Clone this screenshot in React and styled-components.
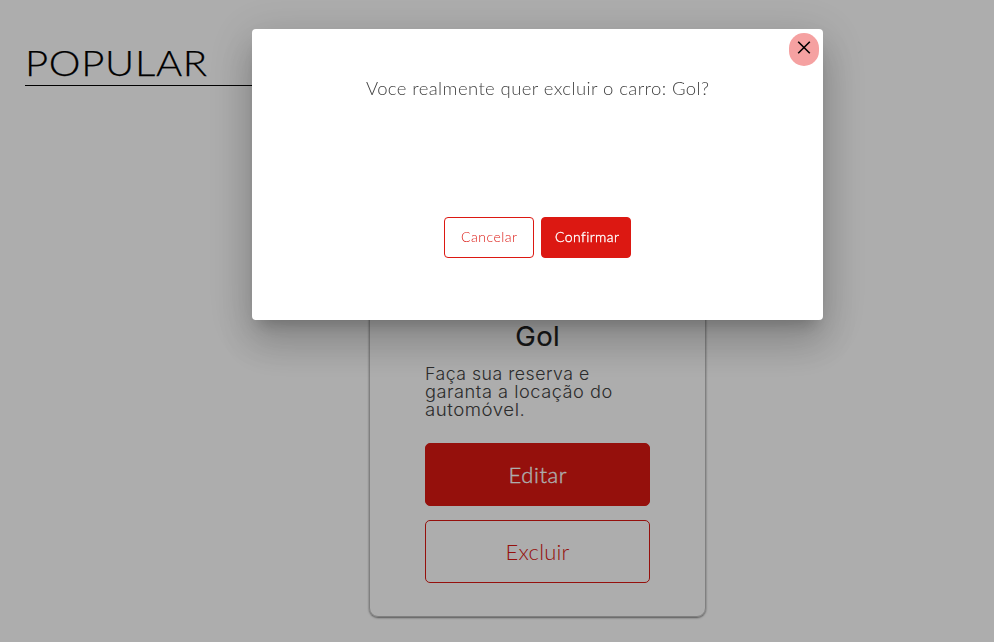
import React from "react";
import styled, { createGlobalStyle } from "styled-components";

const GlobalStyle = createGlobalStyle`
  * { box-sizing: border-box; }
  html, body { margin: 0; height: 100%; overflow: hidden; background: #fff; }
`;

const Page = styled.main`
  height: 642px;
  overflow: hidden;
  padding: 42px 25px 0;
  font-family: Lato, "Open Sans", sans-serif;
`;

const CategoryTitle = styled.h1`
  margin: 0 0 24px;
  width: 520px;
  height: 44px;
  border-bottom: 1px solid #000;
  color: #000;
  font-size: 35px;
  line-height: 40px;
  font-weight: 300;
  -webkit-text-stroke: 0.25px currentColor;
  white-space: nowrap;
`;

const CarCard = styled.article`
  width: 337px;
  height: 507px;
  margin: 0 0 0 344px;
  padding: 0 55px 33px;
  display: flex;
  flex-direction: column;
  justify-content: flex-end;
  border: 1px solid #bdbdbd;
  border-radius: 9px;
  box-shadow: 0 1px 2px rgba(0, 0, 0, 0.5);
`;

const CarName = styled.h2`
  margin: 0 0 13px;
  text-align: center;
  color: #212121;
  font-family: Inter, sans-serif;
  font-size: 27.5px;
  line-height: 32px;
  font-weight: 400;
  -webkit-text-stroke: 0.2px currentColor;
`;

const Description = styled.p`
  margin: 0 0 24px;
  color: #424242;
  font-family: Inter, sans-serif;
  font-size: 17.5px;
  line-height: 18px;
  font-weight: 300;
  white-space: nowrap;
`;

const Spaced = styled.span`
  display: inline-block;
  letter-spacing: ${(p) => p.$gap}px;
  margin-right: ${(p) => -p.$gap}px;
  transform: scaleX(${(p) => p.$stretch || 1});
  transform-origin: left center;
`;

const Button = styled.button`
  display: flex;
  align-items: center;
  justify-content: center;
  padding: 0 0 ${(p) => (p.$large ? 0 : 2)}px;
  border: 1px solid #dc1812;
  border-radius: ${(p) => (p.$large ? 5 : 4)}px;
  width: ${(p) => (p.$large ? 225 : 90)}px;
  height: ${(p) => (p.$large ? 63 : 41)}px;
  background: ${(p) => (p.$filled ? "#dc1812" : "transparent")};
  color: ${(p) => (p.$filled ? "#fff" : "#dc1812")};
  font-family: Lato, sans-serif;
  font-size: ${(p) => (p.$large ? 22 : 14)}px;
  font-weight: 300;
  -webkit-text-stroke: ${(p) => (p.$filled ? 0.35 : 0)}px currentColor;
`;

const ConfirmButton = styled(Button)`
  padding-left: 2px;
`;

const CardActions = styled.div`
  display: grid;
  gap: 14px;
`;

const Backdrop = styled.div`
  position: fixed;
  inset: 0;
  padding: 29px 171px 0 252px;
  background: rgba(0, 0, 0, 0.32);
`;

const Dialog = styled.section`
  height: 291px;
  padding: 4px 4px 62px;
  display: flex;
  flex-direction: column;
  align-items: center;
  background: #fff;
  border-radius: 4px;
  box-shadow: 0 11px 15px -7px rgba(0, 0, 0, 0.2),
    0 24px 38px 3px rgba(0, 0, 0, 0.14), 0 9px 46px 8px rgba(0, 0, 0, 0.12);
`;

const CloseButton = styled.button`
  align-self: flex-end;
  display: flex;
  align-items: flex-start;
  justify-content: center;
  width: 30px;
  height: 33px;
  padding: 8px 0 0;
  border: 0;
  border-radius: 15px;
  background: #f5a1a1;
`;

const Question = styled.p`
  margin: 10px 0 0;
  color: #424242;
  font-family: Lato, sans-serif;
  font-size: 18.5px;
  line-height: 24px;
  font-weight: 300;
  white-space: nowrap;
`;

const DialogActions = styled.div`
  margin-top: auto;
  display: flex;
  gap: 7px;
`;

const CloseIcon = () => (
  <svg width="14" height="14" viewBox="0 0 14 14" fill="none" stroke="#000" strokeWidth="1.6">
    <path d="M1.2 0.7 12.8 12.3M12.8 0.7 1.2 12.3" />
  </svg>
);

export default function App() {
  return (
    <>
      <GlobalStyle />
      <Page>
        <CategoryTitle><Spaced $gap={0.6} $stretch={1.145}>POPULAR</Spaced></CategoryTitle>
        <CarCard>
          <CarName><Spaced $gap={0.3}>Gol</Spaced></CarName>
          <Description>
            <Spaced $gap={0.5} $stretch={1.01}>Faça sua reserva e</Spaced><br />
            <Spaced $gap={0.5} $stretch={1.04}>garanta a locação do</Spaced><br />
            <Spaced $gap={0.5} $stretch={1.065}>automóvel.</Spaced>
          </Description>
          <CardActions>
            <Button $large $filled><Spaced $gap={0.6}>Editar</Spaced></Button>
            <Button $large><Spaced $gap={0.2}>Excluir</Spaced></Button>
          </CardActions>
        </CarCard>
      </Page>
      <Backdrop>
        <Dialog role="dialog" aria-modal="true">
          <CloseButton aria-label="Fechar"><CloseIcon /></CloseButton>
          <Question><Spaced $gap={0.4}>Voce realmente quer excluir o carro: Gol?</Spaced></Question>
          <DialogActions>
            <Button><Spaced $gap={0.5}>Cancelar</Spaced></Button>
            <ConfirmButton $filled><Spaced $gap={0.4}>Confirmar</Spaced></ConfirmButton>
          </DialogActions>
        </Dialog>
      </Backdrop>
    </>
  );
}
